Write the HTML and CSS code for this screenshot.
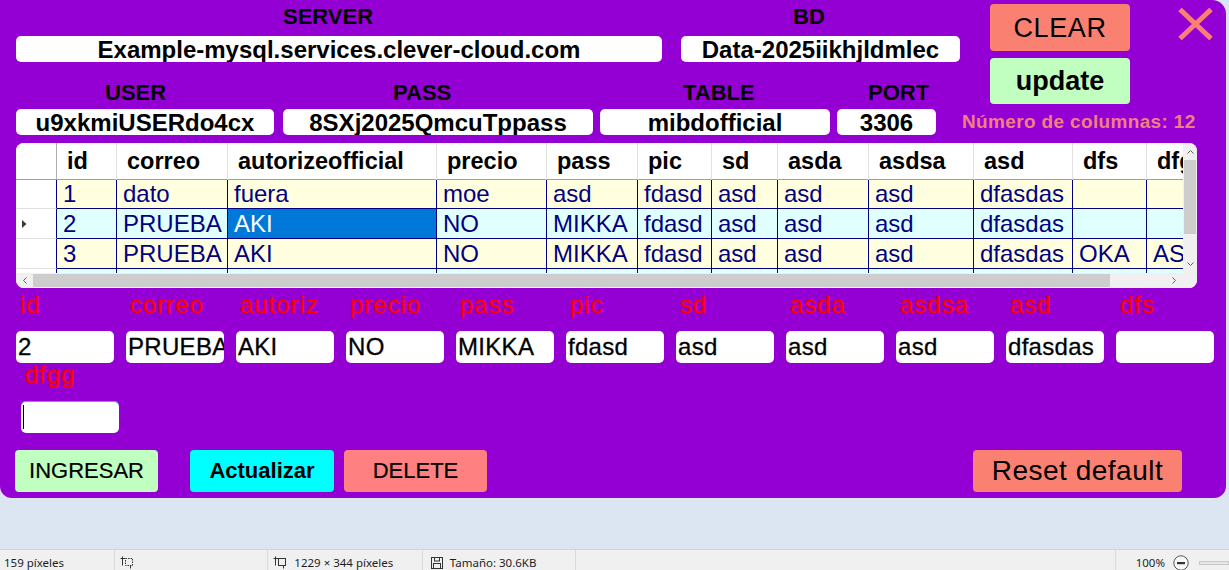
FILE: index.html
```html
<!DOCTYPE html>
<html lang="es">
<head>
<meta charset="utf-8">
<title>Conexión MySQL</title>
<link rel="stylesheet" href="styles.css">
</head>
<body>
<main class="app">
  <div class="top">
    <div class="conn">
      <div class="conn-row conn-row--first">
        <div class="field f-server">
          <span class="cap">SERVER</span>
          <input class="box" type="text" value="Example-mysql.services.clever-cloud.com">
        </div>
        <div class="field f-bd">
          <span class="cap">BD</span>
          <input class="box" type="text" value="Data-2025iikhjldmlec">
        </div>
      </div>
      <div class="conn-row conn-row--second">
        <div class="field f-user">
          <span class="cap">USER</span>
          <input class="box" type="text" value="u9xkmiUSERdo4cx">
        </div>
        <div class="field f-pass">
          <span class="cap">PASS</span>
          <input class="box" type="text" value="8SXj2025QmcuTppass">
        </div>
        <div class="field f-table">
          <span class="cap">TABLE</span>
          <input class="box" type="text" value="mibdofficial">
        </div>
        <div class="field f-port">
          <span class="cap">PORT</span>
          <input class="box" type="text" value="3306">
        </div>
      </div>
    </div>
    <div class="side">
      <button class="btn-top btn-clear" type="button">CLEAR</button>
      <button class="btn-top btn-update" type="button">update</button>
      <div class="ncols">Número de columnas: 12</div>
    </div>
  </div>

  <button class="close" type="button" aria-label="Cerrar">
    <svg width="35" height="32" viewBox="0 0 35 32"><path d="M2 1.5L33 30.5M33 1.5L2 30.5" stroke="#fa8072" stroke-width="5" fill="none"/></svg>
  </button>

  <div class="dgv">
    <div class="dgv-view">
      <table class="dgv-table">
        <thead>
          <tr>
            <th class="rh w-rh"></th>
            <th class="w-id">id</th>
            <th class="w-correo">correo</th>
            <th class="w-aut">autorizeofficial</th>
            <th class="w-precio">precio</th>
            <th class="w-pass">pass</th>
            <th class="w-pic">pic</th>
            <th class="w-sd">sd</th>
            <th class="w-asda">asda</th>
            <th class="w-asdsa">asdsa</th>
            <th class="w-asd">asd</th>
            <th class="w-dfs">dfs</th>
            <th class="w-dfgg">dfgg</th>
          </tr>
        </thead>
        <tbody>
          <tr class="odd first">
            <td class="rh"></td>
            <td>1</td><td>dato</td><td>fuera</td><td>moe</td><td>asd</td><td>fdasd</td><td>asd</td><td>asd</td><td>asd</td><td>dfasdas</td><td></td><td></td>
          </tr>
          <tr class="even">
            <td class="rh"><svg class="cur" width="5" height="8" viewBox="0 0 5 8"><path d="M0 0L4.5 4L0 8Z" fill="#3a3a3a"/></svg></td>
            <td>2</td><td>PRUEBA</td><td class="sel">AKI</td><td>NO</td><td>MIKKA</td><td>fdasd</td><td>asd</td><td>asd</td><td>asd</td><td>dfasdas</td><td></td><td></td>
          </tr>
          <tr class="odd">
            <td class="rh"></td>
            <td>3</td><td>PRUEBA</td><td>AKI</td><td>NO</td><td>MIKKA</td><td>fdasd</td><td>asd</td><td>asd</td><td>asd</td><td>dfasdas</td><td>OKA</td><td>ASD</td>
          </tr>
          <tr class="even">
            <td class="rh"></td>
            <td></td><td></td><td></td><td></td><td></td><td></td><td></td><td></td><td></td><td></td><td></td><td></td>
          </tr>
        </tbody>
      </table>
    </div>
    <div class="vscroll">
      <span class="sb-arrow"><svg width="7" height="5" viewBox="0 0 7 5"><path d="M0.5 4.5L3.5 1.5L6.5 4.5" stroke="#606060" fill="none"/></svg></span>
      <span class="vthumb"></span>
      <span class="sb-fill"></span>
      <span class="sb-arrow"><svg width="7" height="5" viewBox="0 0 7 5"><path d="M0.5 0.5L3.5 3.5L6.5 0.5" stroke="#606060" fill="none"/></svg></span>
    </div>
    <div class="hscroll">
      <span class="sb-arrow"><svg width="5" height="7" viewBox="0 0 5 7"><path d="M4.5 0.5L1.5 3.5L4.5 6.5" stroke="#606060" fill="none"/></svg></span>
      <span class="hthumb"></span>
      <span class="sb-fill"></span>
      <span class="sb-arrow"><svg width="5" height="7" viewBox="0 0 5 7"><path d="M0.5 0.5L3.5 3.5L0.5 6.5" stroke="#606060" fill="none"/></svg></span>
    </div>
    <div class="corner"></div>
  </div>

  <div class="fields">
    <div class="fld"><label class="fld-cap">id</label><input class="fld-in" type="text" value="2"></div>
    <div class="fld"><label class="fld-cap">correo</label><input class="fld-in" type="text" value="PRUEBA"></div>
    <div class="fld"><label class="fld-cap">autoriz</label><input class="fld-in" type="text" value="AKI"></div>
    <div class="fld"><label class="fld-cap">precio</label><input class="fld-in" type="text" value="NO"></div>
    <div class="fld"><label class="fld-cap">pass</label><input class="fld-in" type="text" value="MIKKA"></div>
    <div class="fld"><label class="fld-cap">pic</label><input class="fld-in" type="text" value="fdasd"></div>
    <div class="fld"><label class="fld-cap">sd</label><input class="fld-in" type="text" value="asd"></div>
    <div class="fld"><label class="fld-cap">asda</label><input class="fld-in" type="text" value="asd"></div>
    <div class="fld"><label class="fld-cap">asdsa</label><input class="fld-in" type="text" value="asd"></div>
    <div class="fld"><label class="fld-cap">asd</label><input class="fld-in" type="text" value="dfasdas"></div>
    <div class="fld"><label class="fld-cap">dfs</label><input class="fld-in" type="text" value=""></div>
    <div class="fld fld--wrap"><label class="fld-cap">dfgg</label><input class="fld-in fld-in--focus" type="text" value=""></div>
  </div>

  <div class="actions">
    <button class="act act-in" type="button">INGRESAR</button>
    <button class="act act-upd" type="button">Actualizar</button>
    <button class="act act-del" type="button">DELETE</button>
    <button class="act act-reset" type="button">Reset default</button>
  </div>
</main>

<footer class="status">
  <div class="st-seg st-1">159 píxeles</div>
  <div class="st-seg st-2">
    <svg width="14" height="13" viewBox="0 0 14 13"><path d="M2.5 0.5V9.5M0.5 2.5H5" stroke="#333" fill="none"/><rect x="5.5" y="2.5" width="7" height="7" fill="none" stroke="#333" stroke-dasharray="1.5 1"/><path d="M10.5 10V12.5" stroke="#333"/></svg>
  </div>
  <div class="st-seg st-3">
    <svg width="14" height="13" viewBox="0 0 14 13"><path d="M2.5 0.5V9.5M0.5 2.5H5" stroke="#333" fill="none"/><rect x="5.5" y="2.5" width="7" height="7" fill="none" stroke="#333"/><path d="M10.5 10V12.5" stroke="#333"/></svg>
    <span>1229 × 344 píxeles</span>
  </div>
  <div class="st-seg st-4">
    <svg width="12" height="12" viewBox="0 0 12 12"><rect x="0.5" y="0.5" width="11" height="11" fill="none" stroke="#333"/><rect x="3.5" y="0.5" width="5" height="3.5" fill="none" stroke="#333"/><rect x="2.5" y="6.5" width="7" height="5" fill="none" stroke="#333"/></svg>
    <span>Tamaño: 30.6KB</span>
  </div>
  <div class="st-seg st-5"></div>
  <div class="st-seg st-6">
    <span>100%</span>
    <svg width="16" height="16" viewBox="0 0 16 16"><circle cx="8" cy="8" r="7.2" fill="#f7f7f7" stroke="#555"/><rect x="4" y="7" width="8" height="2.2" fill="#333"/></svg>
    <span class="slider"></span>
  </div>
</footer>
</body>
</html>
```
FILE: styles.css
```css
* { box-sizing: border-box; }

html, body {
  margin: 0;
  height: 570px;
  overflow: hidden;
}

body {
  background: #dce6f2;
  font-family: "Liberation Sans", Arial, sans-serif;
  color: #000;
}

button, input {
  font-family: inherit;
  color: #000;
}

/* ---------- main panel ---------- */
.app {
  position: relative;
  width: 1226px;
  height: 498px;
  margin-bottom: 51px;
  background: #9400d3;
  border-radius: 0 14px 12px 12px;
}

.top {
  display: flex;
  height: 135px;
}

.conn {
  width: 962px;
  padding-left: 16px;
}

.conn-row { display: flex; }
.conn-row--first { padding-top: 5px; }
.conn-row--second { margin-top: 19px; }

.field {
  display: flex;
  flex-direction: column;
}

.cap {
  font-weight: bold;
  font-size: 22px;
  line-height: 24px;
  white-space: nowrap;
}

.box {
  display: block;
  width: 100%;
  height: 26px;
  border: 0;
  border-radius: 5px;
  padding: 1px 0 0;
  background: #fff;
  font-weight: bold;
  font-size: 24px;
  text-align: center;
  outline: none;
}

.conn-row--first .box { margin-top: 7px; }
.conn-row--second .box { margin-top: 4px; }

.f-server { width: 646px; }
.f-server .cap { padding-left: 267px; }
.f-bd { width: 279px; margin-left: 19px; }
.f-bd .cap { padding-left: 112px; }
.f-user { width: 258px; }
.f-user .cap { padding-left: 89px; }
.f-pass { width: 310px; margin-left: 9px; }
.f-pass .cap { padding-left: 110px; }
.f-table { width: 230px; margin-left: 7px; }
.f-table .cap { padding-left: 83px; }
.f-port { width: 99px; margin-left: 7px; }
.f-port .cap { padding-left: 31px; }

.side {
  width: 264px;
  padding-top: 4px;
  display: flex;
  flex-direction: column;
  align-items: flex-start;
}

.btn-top {
  margin-left: 28px;
  width: 140px;
  border: 0;
  border-radius: 4px;
  padding: 0;
}

.btn-clear {
  height: 47px;
  padding-top: 2px;
  background: #fa8072;
  font-size: 27px;
  letter-spacing: 0.6px;
}

.btn-update {
  height: 46px;
  margin-top: 7px;
  background: #c0ffc0;
  font-size: 27px;
  font-weight: bold;
}

.ncols {
  margin-top: 7px;
  line-height: 22px;
  font-size: 19px;
  font-weight: bold;
  color: #f08080;
  letter-spacing: 0.35px;
  white-space: nowrap;
}

.close {
  position: absolute;
  top: 8px;
  right: 13px;
  width: 35px;
  height: 32px;
  padding: 0;
  border: 0;
  background: none;
}
.close svg { display: block; }

/* ---------- data grid ---------- */
.dgv {
  display: grid;
  grid-template-columns: 1167px 14px;
  grid-template-rows: 130px 15px;
  width: 1181px;
  height: 145px;
  margin: 8px 0 0 16px;
  border-radius: 8px;
  overflow: hidden;
  background: #fff;
}

.dgv-view { overflow: hidden; }

.dgv-table {
  table-layout: fixed;
  width: 1205px;
  border-collapse: separate;
  border-spacing: 0;
}

.w-rh { width: 41px; }
.w-id { width: 60px; }
.w-correo { width: 111px; }
.w-aut { width: 209px; }
.w-precio { width: 110px; }
.w-pass { width: 91px; }
.w-pic { width: 74px; }
.w-sd { width: 66px; }
.w-asda { width: 91px; }
.w-asdsa { width: 105px; }
.w-asd { width: 99px; }
.w-dfs { width: 74px; }
.w-dfgg { width: 74px; }

.dgv-table th {
  height: 37px;
  padding: 0 0 0 10px;
  background: #fff;
  border-right: 1px solid #e2e2e2;
  border-bottom: 1px solid #a0a0a0;
  font-weight: bold;
  font-size: 23.5px;
  text-align: left;
  white-space: nowrap;
  overflow: hidden;
}

.dgv-table th.rh { border-right-color: #b0b0b0; }

.dgv-table td {
  height: 30px;
  padding: 0 0 0 6px;
  border-right: 1px solid #000080;
  border-bottom: 1px solid #000080;
  color: #000080;
  font-size: 24px;
  white-space: nowrap;
  overflow: hidden;
}

.dgv-table tr.first td { height: 29px; }

.dgv-table tr.odd { background: #ffffe0; }
.dgv-table tr.even { background: #e0ffff; }

.dgv-table td.rh {
  background: #fff;
  border-bottom-color: #e0e0e0;
}

.dgv-table td.sel {
  background: #0078d7;
  color: #fff;
}

.cur { display: block; }

.vscroll {
  background: #f0f0f0;
  display: flex;
  flex-direction: column;
  align-items: center;
}

.sb-arrow {
  display: flex;
  align-items: center;
  justify-content: center;
  width: 14px;
  height: 17px;
  flex: none;
}

.vthumb {
  width: 12px;
  height: 74px;
  background: #cdcdcd;
  flex: none;
}

.sb-fill { flex: 1; }

.hscroll {
  background: #f0f0f0;
  display: flex;
  align-items: center;
}

.hscroll .sb-arrow {
  width: 17px;
  height: 15px;
}

.hthumb {
  width: 1077px;
  height: 13px;
  background: #cdcdcd;
  flex: none;
}

.corner { background: #f0f0f0; }

/* ---------- edit fields ---------- */
.fields {
  display: flex;
  flex-wrap: wrap;
  column-gap: 12px;
  width: 1200px;
  margin: 5px 0 0 16px;
}

.fld { width: 98px; }
.fld--wrap { margin-left: 5px; }

.fld-cap {
  display: block;
  height: 24px;
  line-height: 24px;
  padding-left: 4px;
  margin-bottom: 14px;
  color: #ff0000;
  font-size: 24px;
  letter-spacing: 1px;
  white-space: nowrap;
  -webkit-text-stroke: 0.35px #ff0000;
}

.fld-in {
  display: block;
  width: 98px;
  height: 32px;
  border: 0;
  border-radius: 5px;
  padding: 0 0 0 2px;
  background: #fff;
  font-size: 24px;
  letter-spacing: 0.3px;
  -webkit-text-stroke: 0.3px #000;
  outline: none;
}

.fld-in--focus {
  background: linear-gradient(#000, #000) 2px 4px / 1px 24px no-repeat, #fff;
  box-shadow: inset 0 1px 0 #5b9fe6;
}

/* ---------- action buttons ---------- */
.actions {
  display: flex;
  margin-top: 17px;
  padding: 0 44px 0 15px;
}

.act {
  height: 42px;
  border: 0;
  border-radius: 4px;
  padding: 0;
  font-size: 22px;
}

.act-in { width: 143px; background: #c0ffc0; -webkit-text-stroke: 0.2px #000; }
.act-upd { width: 144px; margin-left: 32px; background: #00ffff; font-weight: bold; }
.act-del { width: 143px; margin-left: 10px; background: #ff8080; -webkit-text-stroke: 0.2px #000; }
.act-reset {
  width: 209px;
  margin-left: auto;
  background: #fa8072;
  font-size: 28px;
  letter-spacing: 0.5px;
}

/* ---------- status bar ---------- */
.status {
  display: flex;
  height: 26px;
  border-top: 1px solid #d5d5d5;
  background: #f0f0f0;
  font-family: "Noto Sans", sans-serif;
  font-size: 11.5px;
  color: #1e1e1e;
}

.st-seg {
  display: flex;
  align-items: center;
  gap: 7px;
  padding-left: 5px;
  border-left: 1px solid #dadada;
  white-space: nowrap;
}

.st-seg svg { display: block; flex: none; }

.st-1 { width: 115px; border-left: 0; padding-left: 4px; }
.st-2 { width: 155px; }
.st-3 { width: 156px; }
.st-4 { width: 155px; padding-left: 8px; }
.st-5 { width: 545px; }
.st-6 { flex: 1; padding-left: 20px; gap: 8px; }

.slider {
  width: 30px;
  height: 4px;
  margin-left: 2px;
  border: 1px solid #c8c8c8;
  background: #e7e7e7;
}
```
